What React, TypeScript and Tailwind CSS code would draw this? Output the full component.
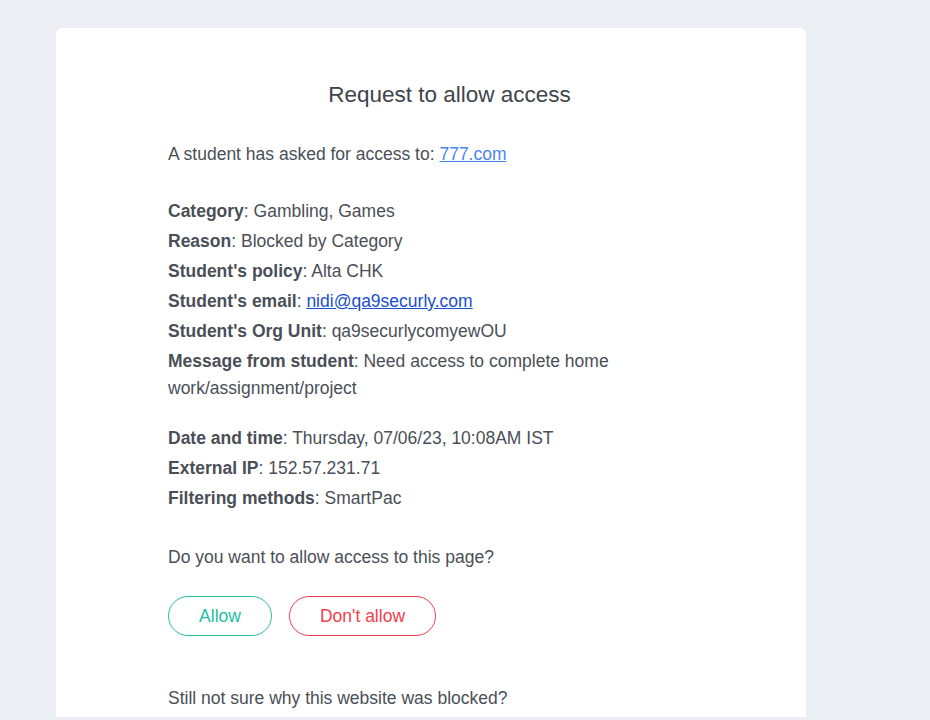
const details = [
  { label: 'Category', value: 'Gambling, Games' },
  { label: 'Reason', value: 'Blocked by Category' },
  { label: "Student's policy", value: 'Alta CHK' },
  { label: "Student's email", value: 'nidi@qa9securly.com', link: true },
  { label: "Student's Org Unit", value: 'qa9securlycomyewOU' },
  { label: 'Message from student', value: 'Need access to complete home work/assignment/project' },
]

const meta = [
  { label: 'Date and time', value: 'Thursday, 07/06/23, 10:08AM IST' },
  { label: 'External IP', value: '152.57.231.71' },
  { label: 'Filtering methods', value: 'SmartPac' },
]

function Row({ label, value, link }: { label: string; value: string; link?: boolean }) {
  return (
    <p className="mb-[3px] max-w-[460px] leading-[27px]">
      <span className="font-bold">{label}</span>:{' '}
      {link ? (
        <a href="#" className="text-[#1a4fcf] underline">
          {value}
        </a>
      ) : (
        value
      )}
    </p>
  )
}

export default function App() {
  return (
    <div className="h-[720px] overflow-hidden bg-[#ebeef3] pl-[56px] pt-[28px] font-['Liberation_Sans',Arial,sans-serif] text-[#4a4f57]">
      <div className="h-[689px] w-[750px] rounded-t-md bg-white pl-[112px] pr-[75px] pt-[53px] text-[17.5px]">
        <h1 className="text-center text-[22.5px] leading-[28px] text-[#40444b]">Request to allow access</h1>

        <p className="mt-[32px] leading-[27px]">
          A student has asked for access to:{' '}
          <a href="#" className="text-[#4a86f0] underline">
            777.com
          </a>
        </p>

        <div className="mt-[30px]">
          {details.map((d) => (
            <Row key={d.label} {...d} />
          ))}
        </div>

        <div className="mt-[23px]">
          {meta.map((d) => (
            <Row key={d.label} {...d} />
          ))}
        </div>

        <p className="mt-[32px] leading-[27px]">Do you want to allow access to this page?</p>

        <div className="mt-[25px] flex gap-[17px]">
          <button className="h-[40px] w-[104px] rounded-full border border-[#23bfa0] text-[17.5px] text-[#23bfa0]">
            Allow
          </button>
          <button className="h-[40px] w-[147px] rounded-full border border-[#f0404c] text-[17.5px] text-[#f0404c]">
            Don&apos;t allow
          </button>
        </div>

        <p className="mt-[49px] leading-[27px]">Still not sure why this website was blocked?</p>
      </div>
    </div>
  )
}
